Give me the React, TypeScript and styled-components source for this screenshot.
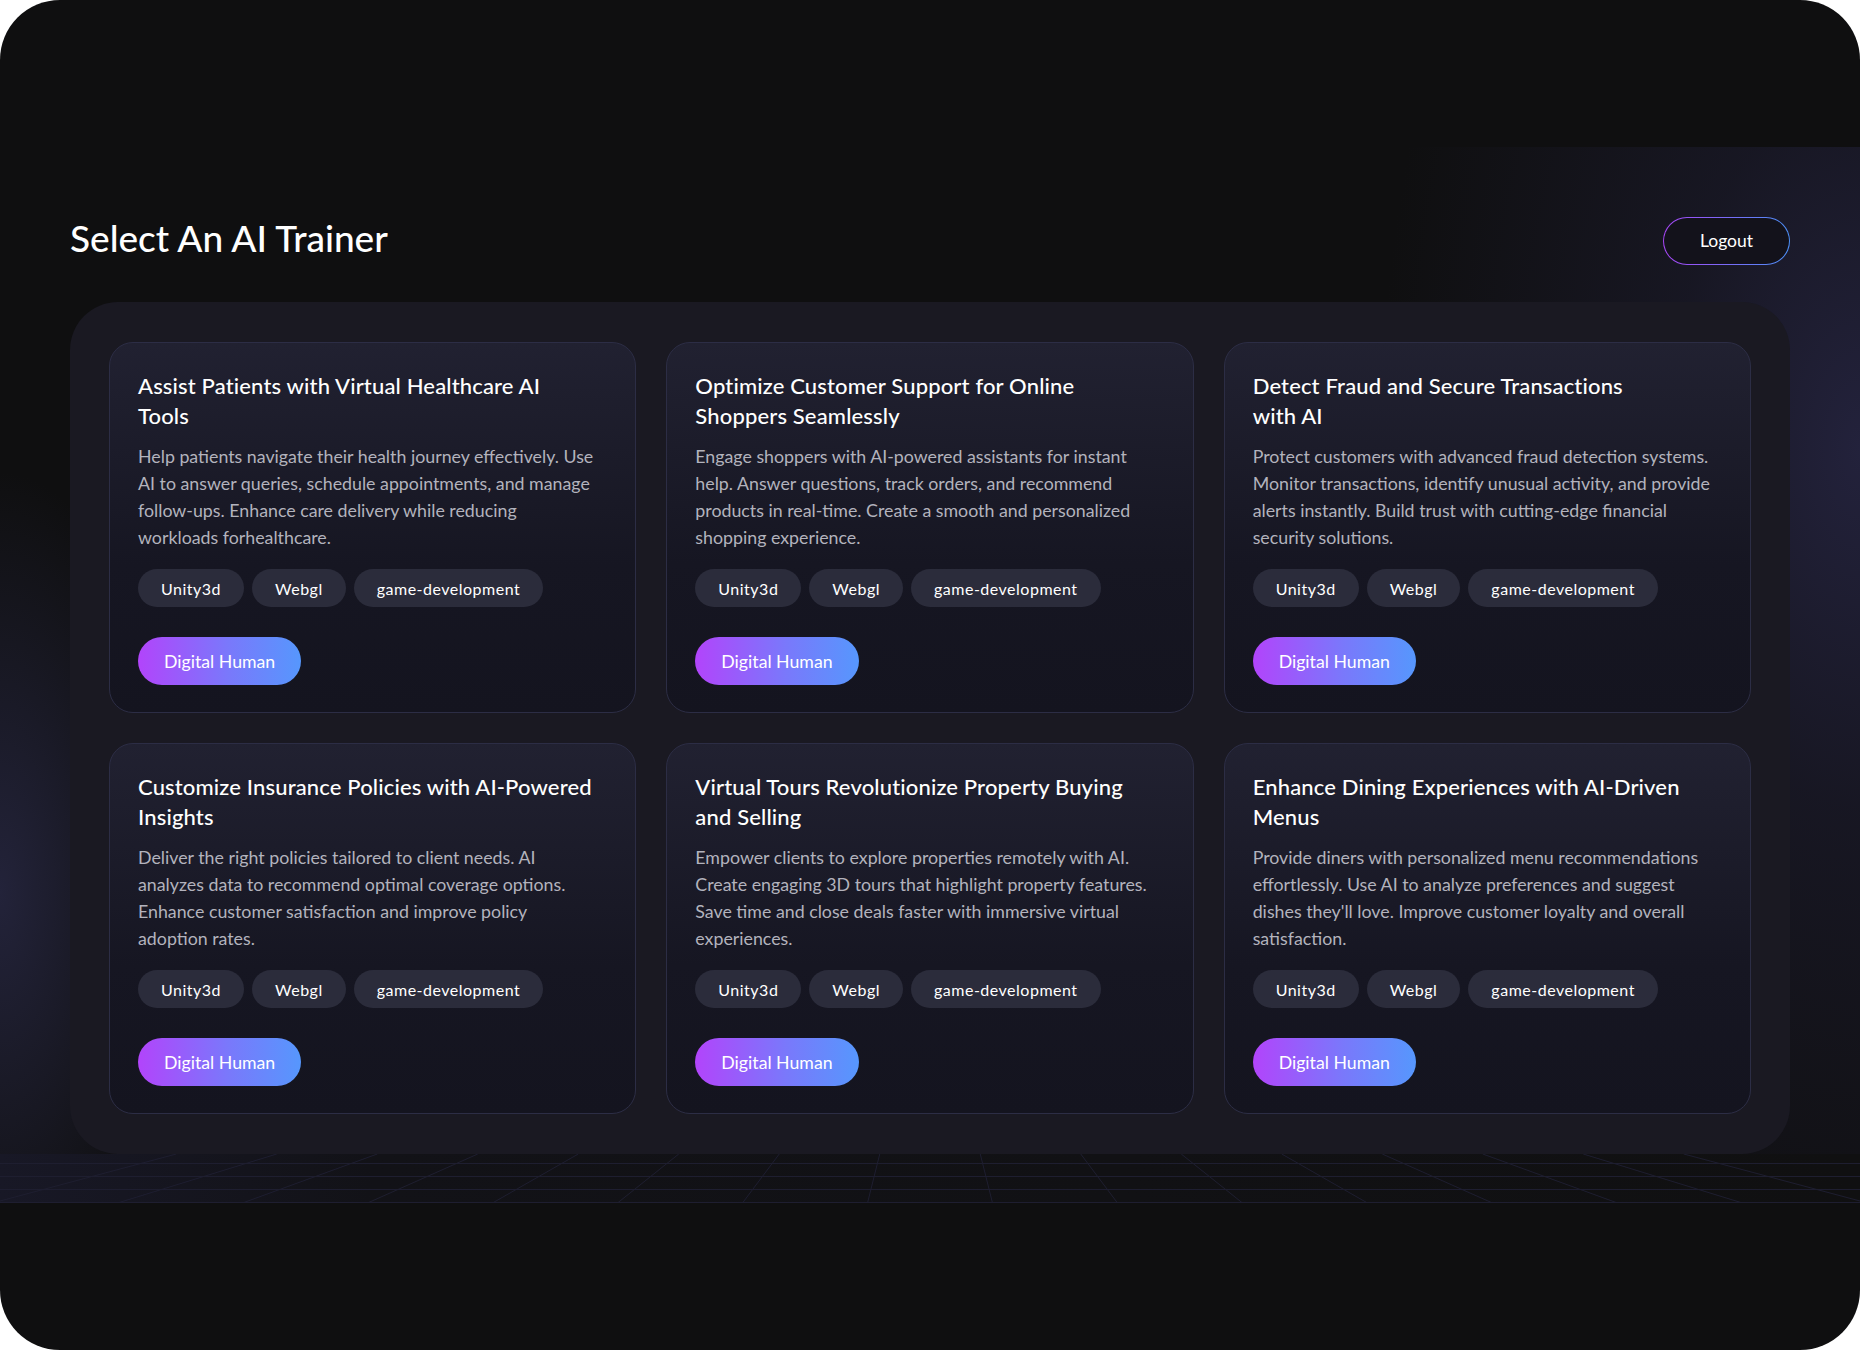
import React from "react";
import styled, {createGlobalStyle} from "styled-components";

const GlobalStyle = createGlobalStyle`
  html, body {
    margin: 0;
    padding: 0;
    background: #ffffff;
  }

  * {
    box-sizing: border-box;
  }
`

interface ITrainer {
    title: string;
    text: string;
}

// line breaks follow the design
const trainers: ITrainer[] = [
    {
        title: "Assist Patients with Virtual Healthcare AI\nTools",
        text: "Help patients navigate their health journey effectively. Use\nAI to answer queries, schedule appointments, and manage\nfollow-ups. Enhance care delivery while reducing\nworkloads forhealthcare.",
    },
    {
        title: "Optimize Customer Support for Online\nShoppers Seamlessly",
        text: "Engage shoppers with AI-powered assistants for instant\nhelp. Answer questions, track orders, and recommend\nproducts in real-time. Create a smooth and personalized\nshopping experience.",
    },
    {
        title: "Detect Fraud and Secure Transactions\nwith AI",
        text: "Protect customers with advanced fraud detection systems.\nMonitor transactions, identify unusual activity, and provide\nalerts instantly. Build trust with cutting-edge financial\nsecurity solutions.",
    },
    {
        title: "Customize Insurance Policies with AI-Powered\nInsights",
        text: "Deliver the right policies tailored to client needs. AI\nanalyzes data to recommend optimal coverage options.\nEnhance customer satisfaction and improve policy\nadoption rates.",
    },
    {
        title: "Virtual Tours Revolutionize Property Buying\nand Selling",
        text: "Empower clients to explore properties remotely with AI.\nCreate engaging 3D tours that highlight property features.\nSave time and close deals faster with immersive virtual\nexperiences.",
    },
    {
        title: "Enhance Dining Experiences with AI-Driven\nMenus",
        text: "Provide diners with personalized menu recommendations\neffortlessly. Use AI to analyze preferences and suggest\ndishes they'll love. Improve customer loyalty and overall\nsatisfaction.",
    },
]

const tags = ["Unity3d", "Webgl", "game-development"]

// perspective floor grid under the panel
const Floor = () => {
    const cx = 930
    const lines = []
    for (let k = -8; k <= 7; k++) {
        const bottom = cx + (k + 0.5) * 125
        const top = cx + (bottom - cx) * 0.804
        lines.push(<line key={k} x1={bottom} y1={49} x2={top} y2={0}/>)
    }
    return (
        <FloorSvg width="1860" height="49" viewBox="0 0 1860 49">
            <defs>
                <linearGradient id="floorTint" x1="0" x2="1" y1="0" y2="0">
                    <stop offset="0" stopColor="#181826"/>
                    <stop offset="0.2" stopColor="#121217"/>
                    <stop offset="1" stopColor="#101011"/>
                </linearGradient>
            </defs>
            <rect x="0" y="0" width="1860" height="49" fill="url(#floorTint)"/>
            <g stroke="#1e1e30" strokeWidth="1">
                {lines}
                <line x1="0" y1="9.5" x2="1860" y2="9.5"/>
                <line x1="0" y1="22.5" x2="1860" y2="22.5"/>
                <line x1="0" y1="35.5" x2="1860" y2="35.5"/>
                <line x1="0" y1="48.5" x2="1860" y2="48.5"/>
            </g>
        </FloorSvg>
    )
}

const TrainerCard = ({title, text}: ITrainer) => (
    <Card>
        <CardTitle>{title}</CardTitle>
        <CardText>{text}</CardText>
        <TagList>
            {tags.map(t => <Tag key={t}>{t}</Tag>)}
        </TagList>
        <HumanButton>Digital Human</HumanButton>
    </Card>
)

export default function App() {
    return (
        <>
            <GlobalStyle/>
            <Frame>
                <Wall>
                    <Header>
                        <PageTitle>Select An AI Trainer</PageTitle>
                        <LogoutButton>Logout</LogoutButton>
                    </Header>
                    <Panel>
                        {trainers.map(t => <TrainerCard key={t.title} {...t}/>)}
                    </Panel>
                </Wall>
                <Floor/>
            </Frame>
        </>
    )
}

const font = `Lato, "Liberation Sans", sans-serif`

const Frame = styled.div`
  width: 1860px;
  height: 1350px;
  border-radius: 60px;
  overflow: hidden;
  background: #0f0f10;
  padding-top: 147px;
  font-family: ${font};
  color: #ffffff;
`

const Wall = styled.div`
  padding: 69px 70px 0 70px;
  background: radial-gradient(ellipse 480px 900px at 100% 30%, rgba(36, 35, 62, 0.95) 0%, rgba(30, 29, 50, 0.55) 40%, rgba(15, 15, 16, 0) 100%),
  radial-gradient(ellipse 180px 420px at 0% 74%, rgba(36, 36, 60, 0.95) 0%, rgba(15, 15, 16, 0) 100%),
  #0f0f10;
`

const Header = styled.div`
  display: flex;
  align-items: center;
  justify-content: space-between;
  height: 49px;
  margin-bottom: 37px;
`

const PageTitle = styled.h1`
  margin: 0 0 6px 0;
  font-size: 37px;
  font-weight: 500;
  color: #ffffff;
`

const LogoutButton = styled.button`
  width: 127px;
  height: 48px;
  border-radius: 24px;
  border: 1.5px solid transparent;
  background: linear-gradient(#13121b, #13121b) padding-box,
  linear-gradient(90deg, #a846f7, #4c90f8) border-box;
  color: #ffffff;
  font-family: ${font};
  font-size: 17.5px;
  cursor: pointer;
`

const Panel = styled.div`
  display: grid;
  grid-template-columns: repeat(3, 1fr);
  gap: 30px;
  padding: 40px 39px;
  border-radius: 48px;
  background: #1a1922;
`

const Card = styled.div`
  display: flex;
  flex-direction: column;
  align-items: flex-start;
  padding: 28px 28px 27px 28px;
  border: 1px solid #2c2d45;
  border-radius: 24px;
  background: linear-gradient(180deg, #212131 0%, #161622 60%, #14141f 100%);
`

const CardTitle = styled.h3`
  margin: 0 0 12px 0;
  font-size: 22px;
  line-height: 30px;
  letter-spacing: 0.15px;
  font-weight: 500;
  color: #ffffff;
  white-space: pre;
`

const CardText = styled.p`
  margin: 0 0 18px 0;
  font-size: 17.8px;
  line-height: 27px;
  color: #b3b3bd;
  white-space: pre;
`

const TagList = styled.div`
  display: flex;
  gap: 8px;
  margin-bottom: 30px;
`

const Tag = styled.span`
  display: inline-flex;
  align-items: center;
  height: 38px;
  padding: 0 23px;
  border-radius: 19px;
  background: #2b2c3b;
  font-size: 16px;
  letter-spacing: 0.5px;
  color: #ffffff;
`

const HumanButton = styled.button`
  height: 48px;
  padding: 0 26px;
  border: none;
  border-radius: 24px;
  background: linear-gradient(90deg, #b244fb 0%, #7a78fb 55%, #5697fd 100%);
  color: #ffffff;
  font-family: ${font};
  font-size: 17.7px;
  cursor: pointer;
`

const FloorSvg = styled.svg`
  display: block;
`
